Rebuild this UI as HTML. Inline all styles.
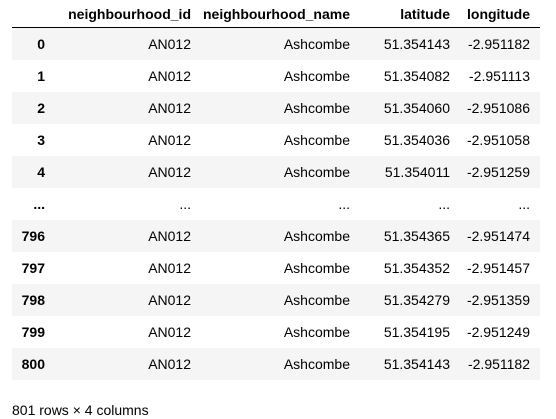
<!DOCTYPE html>
<html><head><style>
body{margin:0;background:#fff;font-family:"Liberation Sans",Arial,sans-serif;font-size:14px;color:#000;}
table{position:absolute;left:12px;top:0;border-collapse:collapse;table-layout:fixed;width:528px;}
th,td{text-align:right;padding:0 10px 0 0;white-space:nowrap;overflow:visible;}
thead th{height:27px;border-bottom:1px solid #000;font-weight:bold;vertical-align:middle;}
tbody tr{height:32px;}
tbody tr:nth-child(odd){background:#f5f5f5;}
tbody th{font-weight:bold;}
.f{position:absolute;left:12px;top:402px;font-size:14px;}
</style></head><body>
<table>
<colgroup><col style="width:43px"><col style="width:146px"><col style="width:159px"><col style="width:100px"><col style="width:80px"></colgroup>
<thead><tr><th></th><th>neighbourhood_id</th><th>neighbourhood_name</th><th>latitude</th><th>longitude</th></tr></thead>
<tbody>
<tr><th>0</th><td>AN012</td><td>Ashcombe</td><td>51.354143</td><td>-2.951182</td></tr>
<tr><th>1</th><td>AN012</td><td>Ashcombe</td><td>51.354082</td><td>-2.951113</td></tr>
<tr><th>2</th><td>AN012</td><td>Ashcombe</td><td>51.354060</td><td>-2.951086</td></tr>
<tr><th>3</th><td>AN012</td><td>Ashcombe</td><td>51.354036</td><td>-2.951058</td></tr>
<tr><th>4</th><td>AN012</td><td>Ashcombe</td><td>51.354011</td><td>-2.951259</td></tr>
<tr><th>...</th><td>...</td><td>...</td><td>...</td><td>...</td></tr>
<tr><th>796</th><td>AN012</td><td>Ashcombe</td><td>51.354365</td><td>-2.951474</td></tr>
<tr><th>797</th><td>AN012</td><td>Ashcombe</td><td>51.354352</td><td>-2.951457</td></tr>
<tr><th>798</th><td>AN012</td><td>Ashcombe</td><td>51.354279</td><td>-2.951359</td></tr>
<tr><th>799</th><td>AN012</td><td>Ashcombe</td><td>51.354195</td><td>-2.951249</td></tr>
<tr><th>800</th><td>AN012</td><td>Ashcombe</td><td>51.354143</td><td>-2.951182</td></tr>
</tbody></table>
<div class="f">801 rows × 4 columns</div>
</body></html>
